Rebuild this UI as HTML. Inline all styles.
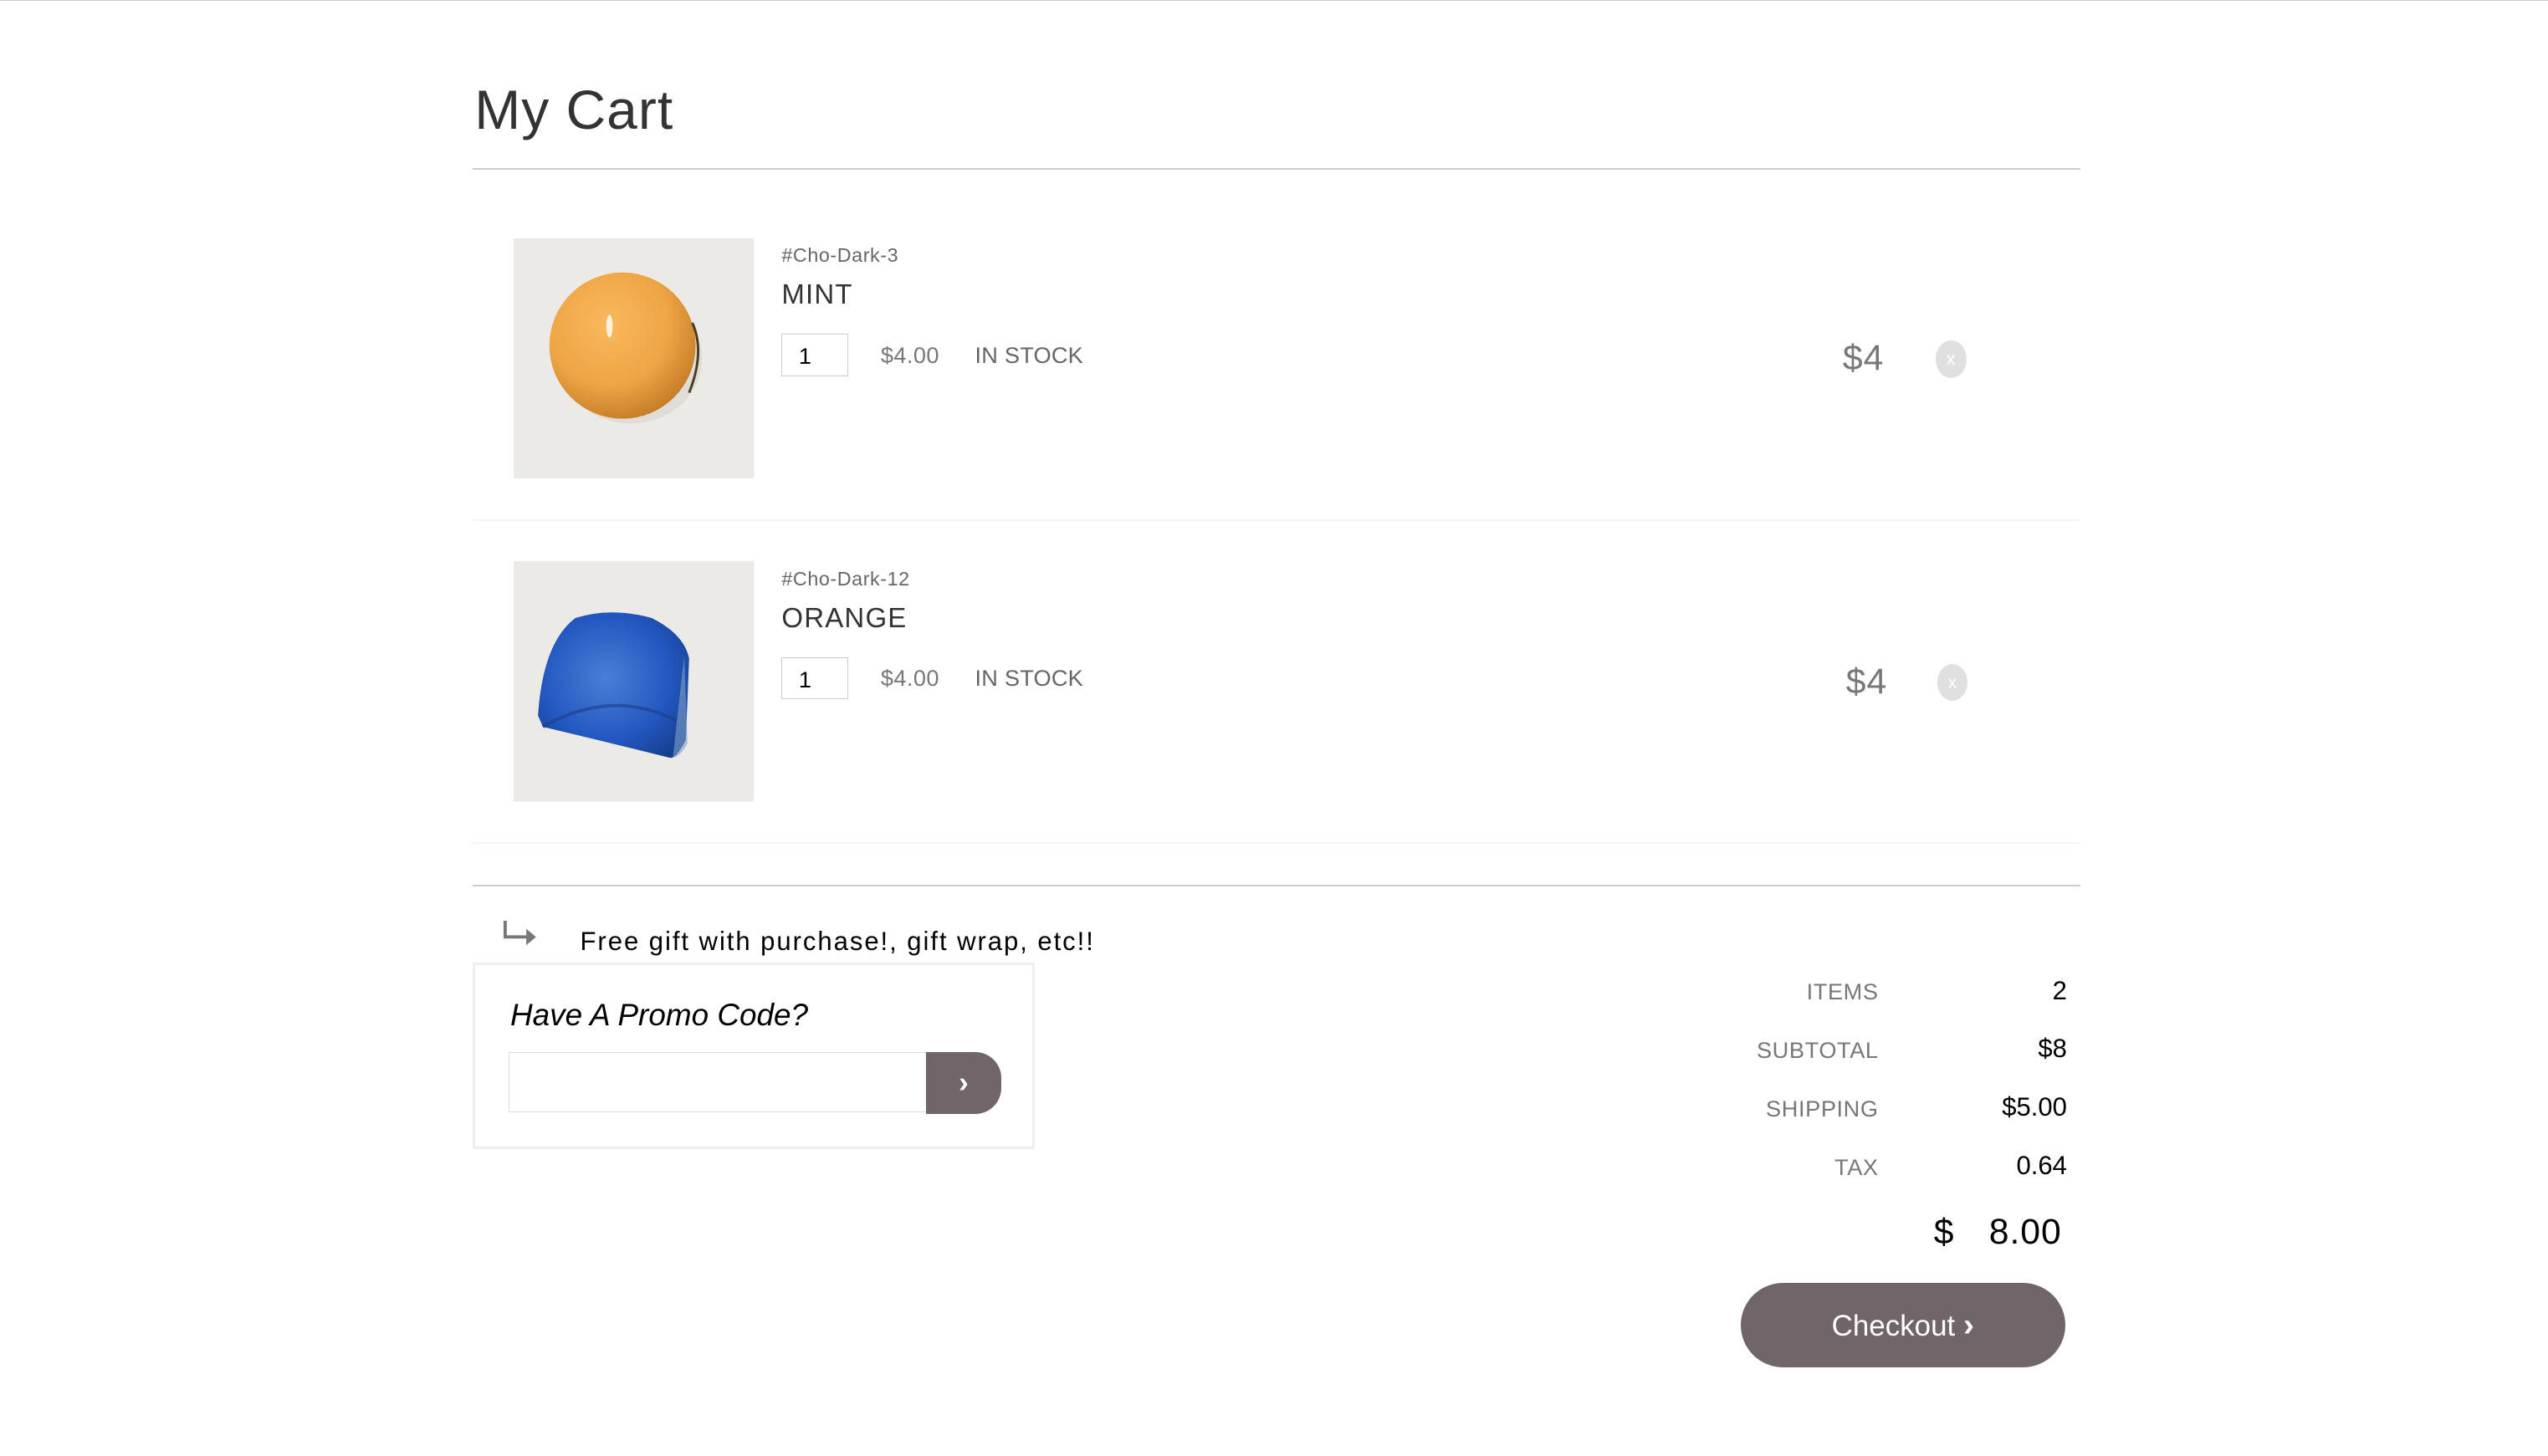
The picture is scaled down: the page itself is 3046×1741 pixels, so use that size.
<!DOCTYPE html>
<html><head><meta charset="utf-8"><style>
html,body{margin:0;padding:0;background:#fff;overflow:hidden}
#w{position:relative;width:1568px;height:896px;zoom:1.94260;font-family:"Liberation Sans","DejaVu Sans",sans-serif;border-top:1px solid #ccc;box-sizing:border-box}
.a{position:absolute;white-space:nowrap;line-height:1}
.hr{position:absolute;left:291px;width:989px;height:1px;background:#ccc}
.hf{position:absolute;left:291px;width:989px;height:1px;background:#f4f4f4}
.sku{font-size:12px;color:#666;letter-spacing:.3px}
.nm{font-size:17px;color:#333;letter-spacing:.6px}
.qty{position:absolute;width:41px;height:26px;border:1px solid #ccc;box-sizing:border-box;font-size:14px;color:#000;padding:5px 0 0 10px}
.g{font-size:14px;color:#777;letter-spacing:.2px}
.gs{font-size:14px;color:#666;letter-spacing:.1px}
.pr{font-size:22px;color:#777;letter-spacing:.5px}
.x{position:absolute;width:19px;height:23px;border-radius:50%;background:#e0e0e0;color:#fff;font-size:11px;text-align:center;line-height:23px}
.lab{font-size:14px;color:#777;text-align:right;width:200px;letter-spacing:.3px}
.val{font-size:16px;color:#000;text-align:right;width:150px}
</style></head><body><div id="w">
<div class="a" style="left:292px;top:50px;font-size:34px;color:#333;letter-spacing:.5px">My Cart</div>
<div class="hr" style="top:103px"></div>

<svg style="position:absolute;left:316px;top:146px" width="148" height="148" viewBox="0 0 148 148">
<defs><radialGradient id="o" cx="0.4" cy="0.35" r="0.7"><stop offset="0" stop-color="#f8b95c"/><stop offset="0.6" stop-color="#eea545"/><stop offset="1" stop-color="#c27a25"/></radialGradient></defs>
<rect width="148" height="148" fill="#eceae6"/>
<ellipse cx="72" cy="74" rx="44" ry="40" fill="#d8d4cf" opacity=".6"/>
<circle cx="67" cy="66" r="45" fill="url(#o)"/>
<path d="M110 52 Q118 70 108 95" stroke="#4a3a20" stroke-width="1.5" fill="none"/>
<ellipse cx="59" cy="54" rx="2" ry="7" fill="#fff" opacity=".8"/>
</svg>
<div class="a sku" style="left:481px;top:151px">#Cho-Dark-3</div>
<div class="a nm" style="left:481px;top:172px">MINT</div>
<div class="qty" style="left:481px;top:205px">1</div>
<div class="a g" style="left:542px;top:211px">$4.00</div>
<div class="a gs" style="left:600px;top:211px">IN STOCK</div>
<div class="a pr" style="left:1134px;top:209px">$4</div>
<div class="x" style="left:1191px;top:209px">x</div>
<div class="hf" style="top:319px"></div>

<svg style="position:absolute;left:316px;top:345px" width="148" height="148" viewBox="0 0 148 148">
<defs><radialGradient id="b" cx="0.45" cy="0.45" r="0.7"><stop offset="0" stop-color="#4a7fd8"/><stop offset="0.6" stop-color="#2358c0"/><stop offset="1" stop-color="#143b8c"/></radialGradient></defs>
<rect width="148" height="148" fill="#eceae6"/>
<path d="M15 95 Q18 50 38 35 Q60 28 85 35 Q105 45 108 60 L106 110 Q100 122 96 121 Q60 112 18 102 Z" fill="url(#b)"/>
<path d="M18 102 Q60 78 100 98" stroke="#1a3d86" stroke-width="2" fill="none" opacity=".6"/>
<path d="M105 58 L107 112 Q103 120 98 121 Z" fill="#7ea0c8" opacity=".6"/>
</svg>
<div class="a sku" style="left:481px;top:350px">#Cho-Dark-12</div>
<div class="a nm" style="left:481px;top:371px">ORANGE</div>
<div class="qty" style="left:481px;top:404px">1</div>
<div class="a g" style="left:542px;top:410px">$4.00</div>
<div class="a gs" style="left:600px;top:410px">IN STOCK</div>
<div class="a pr" style="left:1136px;top:408px">$4</div>
<div class="x" style="left:1192px;top:408px">x</div>
<div class="hf" style="top:518px"></div>

<div class="hr" style="top:544px"></div>
<svg style="position:absolute;left:309px;top:565px" width="24" height="18" viewBox="0 0 24 18"><path d="M2 1 V11 H16" stroke="#777" stroke-width="2" fill="none"/><path d="M15 6 L21 11 L15 16 Z" fill="#777"/></svg>
<div class="a" style="left:357px;top:571px;font-size:16px;color:#000;letter-spacing:1px">Free gift with purchase!, gift wrap, etc!!</div>

<div style="position:absolute;left:291px;top:592px;width:346px;height:115px;border:2px solid #eee;box-sizing:border-box"></div>
<div class="a" style="left:314px;top:615px;font-size:19px;font-style:italic;color:#000">Have A Promo Code?</div>
<div style="position:absolute;left:313px;top:647px;width:258px;height:37px;border:1px solid #ddd;box-sizing:border-box"></div>
<div style="position:absolute;left:570px;top:647px;width:46px;height:38px;background:#706669;border-radius:0 16px 16px 0;color:#fff;font-size:18px;text-align:center;line-height:38px;font-weight:bold">›</div>

<div class="a lab" style="left:956px;top:603px">ITEMS</div>
<div class="a val" style="left:1122px;top:601px">2</div>
<div class="a lab" style="left:956px;top:639px">SUBTOTAL</div>
<div class="a val" style="left:1122px;top:637px">$8</div>
<div class="a lab" style="left:956px;top:675px">SHIPPING</div>
<div class="a val" style="left:1122px;top:673px">$5.00</div>
<div class="a lab" style="left:956px;top:711px">TAX</div>
<div class="a val" style="left:1122px;top:709px">0.64</div>
<div class="a" style="left:1190px;top:747px;font-size:22px;color:#000">$</div>
<div class="a" style="left:1224px;top:747px;font-size:22px;color:#000;letter-spacing:.5px">8.00</div>

<div style="position:absolute;left:1071px;top:789px;width:200px;height:52px;border-radius:26px;background:#706669;color:#fff;font-size:18px;text-align:center;line-height:52px">Checkout <b style="font-size:20px">›</b></div>
</div></body></html>
